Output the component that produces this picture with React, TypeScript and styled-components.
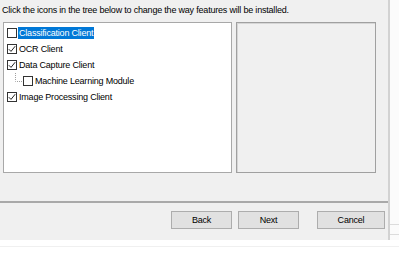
import styled, { createGlobalStyle, css } from 'styled-components'

const GlobalStyle = createGlobalStyle`
  html, body {
    margin: 0;
    padding: 0;
    background: #ffffff;
  }
  * {
    box-sizing: border-box;
  }
`

const Screen = styled.div`
  width: 399px;
  height: 257px;
  display: flex;
  flex-direction: column;
  background: #ffffff;
  font-family: 'Liberation Sans', Arial, sans-serif;
  font-size: 9px;
  letter-spacing: -0.2px;
  color: #000000;
  overflow: hidden;
`

const Top = styled.div`
  height: 240px;
  display: flex;
`

const Dialog = styled.div`
  width: 388px;
  background: #f0f0f0;
  display: flex;
  flex-direction: column;
`

const Edge = styled.div`
  width: 2px;
  background: #d2d2d2;
`

const Strip = styled.div`
  flex: 1;
  background: #fbfbfb;
  display: flex;
  flex-direction: column;
  padding-top: 224px;
  gap: 9px;
`

const StripLine = styled.div`
  height: 1px;
  background: #dcdcdc;
`

const Footer = styled.div`
  flex: 1;
  padding-top: 6px;
`

const FooterLine = styled.div`
  height: 1px;
  background: #f0f0f0;
`

const Hint = styled.div`
  padding: 5px 0 0 2px;
  height: 22px;
  line-height: 11px;
  white-space: nowrap;
`

const Panels = styled.div`
  display: flex;
  gap: 4px;
  padding-left: 3px;
  height: 151px;
`

const TreeBox = styled.div`
  width: 229px;
  background: #ffffff;
  border: 1px solid #a8a8a8;
  padding: 2px 0 0 3px;
  display: flex;
  flex-direction: column;
`

const InfoBox = styled.div`
  width: 140px;
  background: #f0f0f0;
  border: 1px solid #a0a0a0;
  box-shadow: inset 1px 1px 0 #d6d6d6;
`

const Separator = styled.div`
  margin-top: 28px;
  height: 2px;
  background: #a9a9a9;
`

const Buttons = styled.div`
  display: flex;
  justify-content: flex-end;
  padding: 8px 3px 0 0;
`

const Button = styled.button<{ width: number; gapBefore?: number }>`
  width: ${({ width }) => width}px;
  height: 18px;
  margin-left: ${({ gapBefore = 0 }) => gapBefore}px;
  padding: 0;
  background: #e1e1e1;
  border: 1px solid #adadad;
  font-family: 'Liberation Sans', Arial, sans-serif;
  font-size: 9px;
  letter-spacing: -0.2px;
  color: #000000;
`

const Row = styled.div<{ indent?: number }>`
  height: 16px;
  display: flex;
  align-items: center;
  padding-left: ${({ indent = 0 }) => indent}px;
`

const Box = styled.span`
  width: 10px;
  height: 10px;
  border: 1px solid #333333;
  background: #ffffff;
  display: flex;
  align-items: center;
  justify-content: center;
  flex-shrink: 0;
`

const Label = styled.span<{ selected?: boolean }>`
  margin-left: 1px;
  padding: 0 1px;
  height: 12px;
  line-height: 12px;
  white-space: nowrap;
  ${({ selected }) =>
    selected &&
    css`
      background: #0078d7;
      color: #ffffff;
    `}
`

const Check = ({ checked }: { checked: boolean }) => (
  <Box>
    {checked && (
      <svg width="8" height="8" viewBox="0 0 8 8">
        <path d="M0.8 4.2 L3 6.4 L7.2 1.2" fill="none" stroke="#222" strokeWidth="1" />
      </svg>
    )}
  </Box>
)

const Connector = () => (
  <svg width="8" height="16" viewBox="0 0 8 16" style={{ flexShrink: 0 }}>
    <path d="M0.5 0 V8.5 H8" fill="none" stroke="#a0a0a0" strokeWidth="1" strokeDasharray="1 1" />
  </svg>
)

type Feature = { name: string; checked: boolean; child?: boolean; selected?: boolean }

const features: Feature[] = [
  { name: 'Classification Client', checked: false, selected: true },
  { name: 'OCR Client', checked: true },
  { name: 'Data Capture Client', checked: true },
  { name: 'Machine Learning Module', checked: false, child: true },
  { name: 'Image Processing Client', checked: true },
]

export default function App() {
  return (
    <>
      <GlobalStyle />
      <Screen>
        <Top>
          <Dialog>
            <Hint>Click the icons in the tree below to change the way features will be installed.</Hint>
            <Panels>
              <TreeBox>
                {features.map((f) => (
                  <Row key={f.name} indent={f.child ? 8 : 0}>
                    {f.child && <Connector />}
                    <Check checked={f.checked} />
                    <Label selected={f.selected}>{f.name}</Label>
                  </Row>
                ))}
              </TreeBox>
              <InfoBox />
            </Panels>
            <Separator />
            <Buttons>
              <Button width={61}>Back</Button>
              <Button width={61} gapBefore={6}>Next</Button>
              <Button width={68} gapBefore={18}>Cancel</Button>
            </Buttons>
          </Dialog>
          <Edge />
          <Strip>
            <StripLine />
            <StripLine />
          </Strip>
        </Top>
        <Footer>
          <FooterLine />
        </Footer>
      </Screen>
    </>
  )
}
